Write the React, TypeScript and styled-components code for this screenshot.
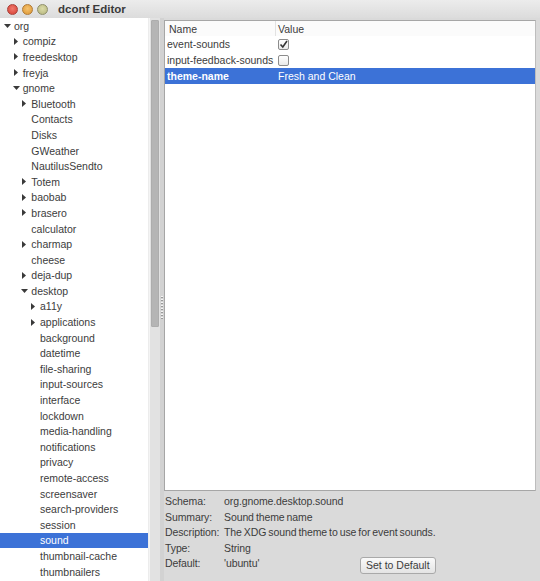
import React from 'react'
import styled, { createGlobalStyle } from 'styled-components'

const GlobalStyle = createGlobalStyle`
  html, body {
    margin: 0;
    padding: 0;
    background: #dadada;
  }
  body {
    font-family: 'Liberation Sans', Arial, sans-serif;
    font-size: 10.5px;
    color: #3c3c3c;
  }
`

type Node = { label: string; level: number; expander?: 'open' | 'closed'; selected?: boolean }

const tree: Node[] = [
  { label: 'org', level: 0, expander: 'open' },
  { label: 'compiz', level: 1, expander: 'closed' },
  { label: 'freedesktop', level: 1, expander: 'closed' },
  { label: 'freyja', level: 1, expander: 'closed' },
  { label: 'gnome', level: 1, expander: 'open' },
  { label: 'Bluetooth', level: 2, expander: 'closed' },
  { label: 'Contacts', level: 2 },
  { label: 'Disks', level: 2 },
  { label: 'GWeather', level: 2 },
  { label: 'NautilusSendto', level: 2 },
  { label: 'Totem', level: 2, expander: 'closed' },
  { label: 'baobab', level: 2, expander: 'closed' },
  { label: 'brasero', level: 2, expander: 'closed' },
  { label: 'calculator', level: 2 },
  { label: 'charmap', level: 2, expander: 'closed' },
  { label: 'cheese', level: 2 },
  { label: 'deja-dup', level: 2, expander: 'closed' },
  { label: 'desktop', level: 2, expander: 'open' },
  { label: 'a11y', level: 3, expander: 'closed' },
  { label: 'applications', level: 3, expander: 'closed' },
  { label: 'background', level: 3 },
  { label: 'datetime', level: 3 },
  { label: 'file-sharing', level: 3 },
  { label: 'input-sources', level: 3 },
  { label: 'interface', level: 3 },
  { label: 'lockdown', level: 3 },
  { label: 'media-handling', level: 3 },
  { label: 'notifications', level: 3 },
  { label: 'privacy', level: 3 },
  { label: 'remote-access', level: 3 },
  { label: 'screensaver', level: 3 },
  { label: 'search-providers', level: 3 },
  { label: 'session', level: 3 },
  { label: 'sound', level: 3, selected: true },
  { label: 'thumbnail-cache', level: 3 },
  { label: 'thumbnailers', level: 3 },
]

const details = [
  { label: 'Schema:', value: 'org.gnome.desktop.sound' },
  { label: 'Summary:', value: 'Sound theme name' },
  { label: 'Description:', value: 'The XDG sound theme to use for event sounds.' },
  { label: 'Type:', value: 'String' },
]

const SELECT = '#3c72d7'

const Window = styled.div`
  width: 540px;
  height: 581px;
  display: flex;
  flex-direction: column;
  overflow: hidden;
  background: #dadada;
`

const TitleBar = styled.div`
  height: 18px;
  flex: none;
  display: flex;
  align-items: center;
  padding-left: 7px;
  background: linear-gradient(#ececec, #dcdcdc);
`

const Light = styled.span<{ $c1: string; $c2: string; $edge: string }>`
  width: 9px;
  height: 9px;
  border-radius: 50%;
  margin-right: 4px;
  border: 1px solid ${p => p.$edge};
  background: radial-gradient(circle at 50% 40%, ${p => p.$c1}, ${p => p.$c2});
`

const Title = styled.span`
  margin-left: 6px;
  font-weight: bold;
  font-size: 11.5px;
  color: #3a3a3a;
`

const Body = styled.div`
  flex: 1;
  display: flex;
  min-height: 0;
`

const TreePane = styled.div`
  width: 160px;
  flex: none;
  display: flex;
`

const Tree = styled.div`
  width: 149px;
  background: #fff;
  border-right: 1px solid #ececec;
  overflow: hidden;
`

const Row = styled.div<{ $selected?: boolean }>`
  height: 15.6px;
  display: flex;
  align-items: center;
  white-space: nowrap;
  background: ${p => (p.$selected ? SELECT : 'transparent')};
  color: ${p => (p.$selected ? '#fff' : '#3c3c3c')};
`

const Indent = styled.span<{ $level: number }>`
  flex: none;
  width: ${p => 3 + p.$level * 8.67}px;
`

const Expander = styled.span`
  flex: none;
  width: 11px;
  display: flex;
  align-items: center;
`

const Scrollbar = styled.div`
  width: 10px;
  background: #e2e2e2;
  border-left: 1px solid #f4f4f4;
  display: flex;
  flex-direction: column;
`

const Thumb = styled.div`
  margin: 2px 1px 0 1px;
  height: 305px;
  background: #b5b5b5;
  border: 1px solid #adadad;
  border-radius: 1px;
`

const Handle = styled.div`
  width: 4px;
  flex: none;
  display: flex;
  align-items: center;
  justify-content: center;
  background: #d2d2d2;
`

const Grip = styled.div`
  width: 2px;
  height: 24px;
  margin-top: 16px;
  background: repeating-linear-gradient(#f4f4f4 0 1px, #9a9a9a 1px 2px, transparent 2px 3px);
`

const RightPane = styled.div`
  flex: 1;
  display: flex;
  flex-direction: column;
  padding: 2px 4px 0 0;
  min-width: 0;
`

const ListBox = styled.div`
  flex: 1;
  background: #fff;
  border: 1px solid #a6a6a6;
  border-right-color: #bdbdbd;
`

const KeyRow = styled.div<{ $header?: boolean; $selected?: boolean }>`
  height: ${p => (p.$header ? 15 : 16)}px;
  display: grid;
  grid-template-columns: 111px 1fr;
  align-items: center;
  background: ${p => (p.$selected ? SELECT : p.$header ? '#fbfbfb' : 'transparent')};
  color: ${p => (p.$selected ? '#fff' : '#3c3c3c')};
`

const Cell = styled.div<{ $bold?: boolean; $divider?: boolean }>`
  height: 100%;
  display: flex;
  align-items: center;
  padding-left: ${p => (p.$divider ? 4 : 2)}px;
  font-weight: ${p => (p.$bold ? 'bold' : 'normal')};
  border-right: ${p => (p.$divider ? '1px solid #e2e2e2' : 'none')};
  white-space: nowrap;
  overflow: hidden;
`

const CheckBox = styled.span<{ $checked?: boolean }>`
  width: 9px;
  height: 9px;
  border: 1px solid #8c8c8c;
  border-radius: 2px;
  background: linear-gradient(#ffffff, #e9e9e9);
  display: flex;
  align-items: center;
  justify-content: center;
`

const Details = styled.div`
  padding: 3px 0 10px 1px;
  display: grid;
  grid-template-columns: 59px 1fr;
  grid-auto-rows: 15.5px;
  align-items: center;
  white-space: nowrap;
  word-spacing: -0.8px;
  letter-spacing: -0.1px;
`

const DefaultValue = styled.div`
  display: flex;
  align-items: center;
`

const ValueText = styled.span`
  width: 136px;
`

const Button = styled.button`
  height: 17px;
  margin-top: 4px;
  padding: 0 5px;
  font-family: inherit;
  font-size: 10.5px;
  color: #3c3c3c;
  border: 1px solid #a9a9a9;
  border-radius: 3px;
  background: linear-gradient(#fafafa, #e4e4e4);
`

function Triangle({ dir, color }: { dir: 'open' | 'closed'; color: string }) {
  return dir === 'open' ? (
    <svg width='7' height='4' viewBox='0 0 7 4' style={{ marginLeft: 1 }}>
      <polygon points='0,0 7,0 3.5,4' fill={color} />
    </svg>
  ) : (
    <svg width='4' height='7' viewBox='0 0 4 7' style={{ marginLeft: 2 }}>
      <polygon points='0,0 4,3.5 0,7' fill={color} />
    </svg>
  )
}

function Tick() {
  return (
    <svg width='9' height='9' viewBox='0 0 9 9'>
      <path d='M1.5 4.5 L3.8 7 L8 1' stroke='#333' strokeWidth='1.6' fill='none' />
    </svg>
  )
}

export default function App() {
  return (
    <Window>
      <GlobalStyle />
      <TitleBar>
        <Light $c1='#f07a6e' $c2='#d63d30' $edge='#a8413a' />
        <Light $c1='#f5c26e' $c2='#dc9530' $edge='#b07a36' />
        <Light $c1='#dcdca8' $c2='#b4b47c' $edge='#8f8f6a' />
        <Title>dconf Editor</Title>
      </TitleBar>
      <Body>
        <TreePane>
          <Tree>
            {tree.map(n => (
              <Row key={n.label} $selected={n.selected}>
                <Indent $level={n.level} />
                <Expander>{n.expander && <Triangle dir={n.expander} color='#3a3a3a' />}</Expander>
                {n.label}
              </Row>
            ))}
          </Tree>
          <Scrollbar>
            <Thumb />
          </Scrollbar>
        </TreePane>
        <Handle>
          <Grip />
        </Handle>
        <RightPane>
          <ListBox>
            <KeyRow $header>
              <Cell $divider>Name</Cell>
              <Cell>Value</Cell>
            </KeyRow>
            <KeyRow>
              <Cell>event-sounds</Cell>
              <Cell>
                <CheckBox $checked>
                  <Tick />
                </CheckBox>
              </Cell>
            </KeyRow>
            <KeyRow>
              <Cell>input-feedback-sounds</Cell>
              <Cell>
                <CheckBox />
              </Cell>
            </KeyRow>
            <KeyRow $selected>
              <Cell $bold>theme-name</Cell>
              <Cell>Fresh and Clean</Cell>
            </KeyRow>
          </ListBox>
          <Details>
            {details.map(d => (
              <React.Fragment key={d.label}>
                <span>{d.label}</span>
                <span>{d.value}</span>
              </React.Fragment>
            ))}
            <span>Default:</span>
            <DefaultValue>
              <ValueText>'ubuntu'</ValueText>
              <Button>Set to Default</Button>
            </DefaultValue>
          </Details>
        </RightPane>
      </Body>
    </Window>
  )
}
